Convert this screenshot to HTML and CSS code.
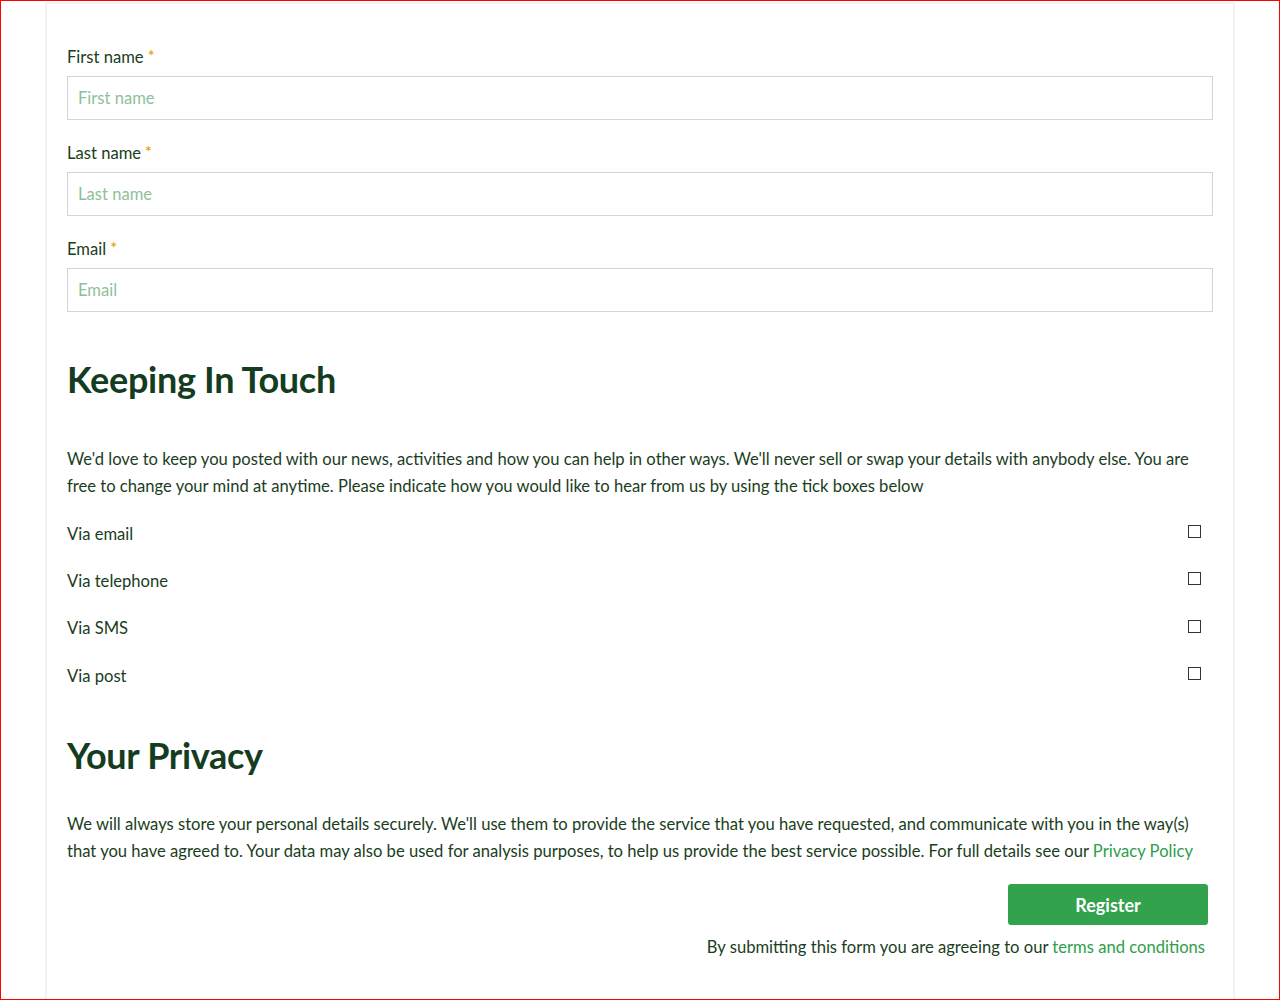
FILE: index.html
```html
<!DOCTYPE html>
<html lang="en">
<head>
<meta charset="utf-8">
<title>Register</title>
<link rel="stylesheet" href="styles.css">
</head>
<body>
<div class="frame">
  <main class="card">
    <form class="form">
      <div class="field">
        <label class="label" for="fn">First name <span class="req">*</span></label>
        <input class="input" id="fn" type="text" placeholder="First name">
      </div>
      <div class="field">
        <label class="label" for="ln">Last name <span class="req">*</span></label>
        <input class="input" id="ln" type="text" placeholder="Last name">
      </div>
      <div class="field">
        <label class="label" for="em">Email <span class="req">*</span></label>
        <input class="input" id="em" type="text" placeholder="Email">
      </div>

      <h2 class="heading heading-touch">Keeping In Touch</h2>
      <p class="text text-touch">We'd love to keep you posted with our news, activities and how you can help in other ways. We'll never sell or swap your details with anybody else. You are free to change your mind at anytime. Please indicate how you would like to hear from us by using the tick boxes below</p>

      <div class="checks">
        <label class="check-row"><span>Via email</span><span class="box"></span></label>
        <label class="check-row"><span>Via telephone</span><span class="box"></span></label>
        <label class="check-row"><span>Via SMS</span><span class="box"></span></label>
        <label class="check-row"><span>Via post</span><span class="box"></span></label>
      </div>

      <h2 class="heading heading-privacy">Your Privacy</h2>
      <p class="text text-privacy">We will always store your personal details securely. We'll use them to provide the service that you have requested, and communicate with you in the way(s) that you have agreed to. Your data may also be used for analysis purposes, to help us provide the best service possible. For full details see our <a class="link" href="#">Privacy Policy</a></p>

      <div class="submit">
        <button class="btn" type="button">Register</button>
        <p class="terms">By submitting this form you are agreeing to our <a class="link" href="#">terms and conditions</a></p>
      </div>
    </form>
  </main>
</div>
</body>
</html>
```

FILE: styles.css
```css
* { box-sizing: border-box; }
html, body { margin: 0; padding: 0; background: #fff; }
body {
  font-family: Lato, "Open Sans", sans-serif;
  color: #1a3d22;
}
.frame {
  width: 1280px;
  height: 1000px;
  border: 1px solid #ff0000;
  overflow: hidden;
}
.card {
  width: 1190px;
  margin: 0 auto;
  height: 1010px;
  margin-top: 1px;
  border: 2px solid #f3f3f3;
  padding: 42px 20px 0 20px;
}
.form { display: flex; flex-direction: column; }
.field { display: flex; flex-direction: column; margin-bottom: 22px; }
.label {
  font-size: 16.6px;
  line-height: 22px;
  margin-bottom: 8px;
  color: #1a3d22;
}
.req { color: #eda21c; font-size: 15px; font-weight: 700; vertical-align: top; position: relative; top: -2px; }
.input {
  width: 100%;
  height: 44px;
  border: 1px solid #cfd8d3;
  padding: 0 10px;
  font-family: inherit;
  font-size: 16.6px;
  color: #1a3d22;
  background: #fff;
  outline: none;
}
.input::placeholder { color: #8fbf9a; }
.heading {
  margin: 0;
  font-size: 36px;
  line-height: 44px;
  font-weight: 700;
  color: #143d1f;
  letter-spacing: -0.3px;
}
.heading-touch { margin-top: 23px; }
.text {
  margin: 0;
  font-size: 16.6px;
  line-height: 27px;
  color: #1a3d22;
}
.text-touch { margin-top: 45px; }
.checks { display: flex; flex-direction: column; margin-top: 10px; }
.check-row {
  display: flex;
  justify-content: space-between;
  align-items: center;
  height: 47.3px;
  font-size: 16.6px;
  padding-right: 12px;
}
.box {
  width: 13px;
  height: 13px;
  border: 1px solid #333;
  background: #fff;
  margin-top: -4px;
}
.heading-privacy { margin-top: 34px; }
.text-privacy { margin-top: 34px; }
.link { color: #2e9e49; text-decoration: none; }
.submit { display: flex; flex-direction: column; align-items: flex-end; margin-top: 19px; }
.btn {
  width: 200px;
  height: 41px;
  margin-right: 5px;
  background: #33a24c;
  color: #fff;
  border: none;
  border-radius: 3px;
  font-family: inherit;
  font-size: 18px;
  font-weight: 700;
}
.terms {
  margin: 10px 8px 0 0;
  font-size: 16.6px;
  line-height: 24px;
}
```
